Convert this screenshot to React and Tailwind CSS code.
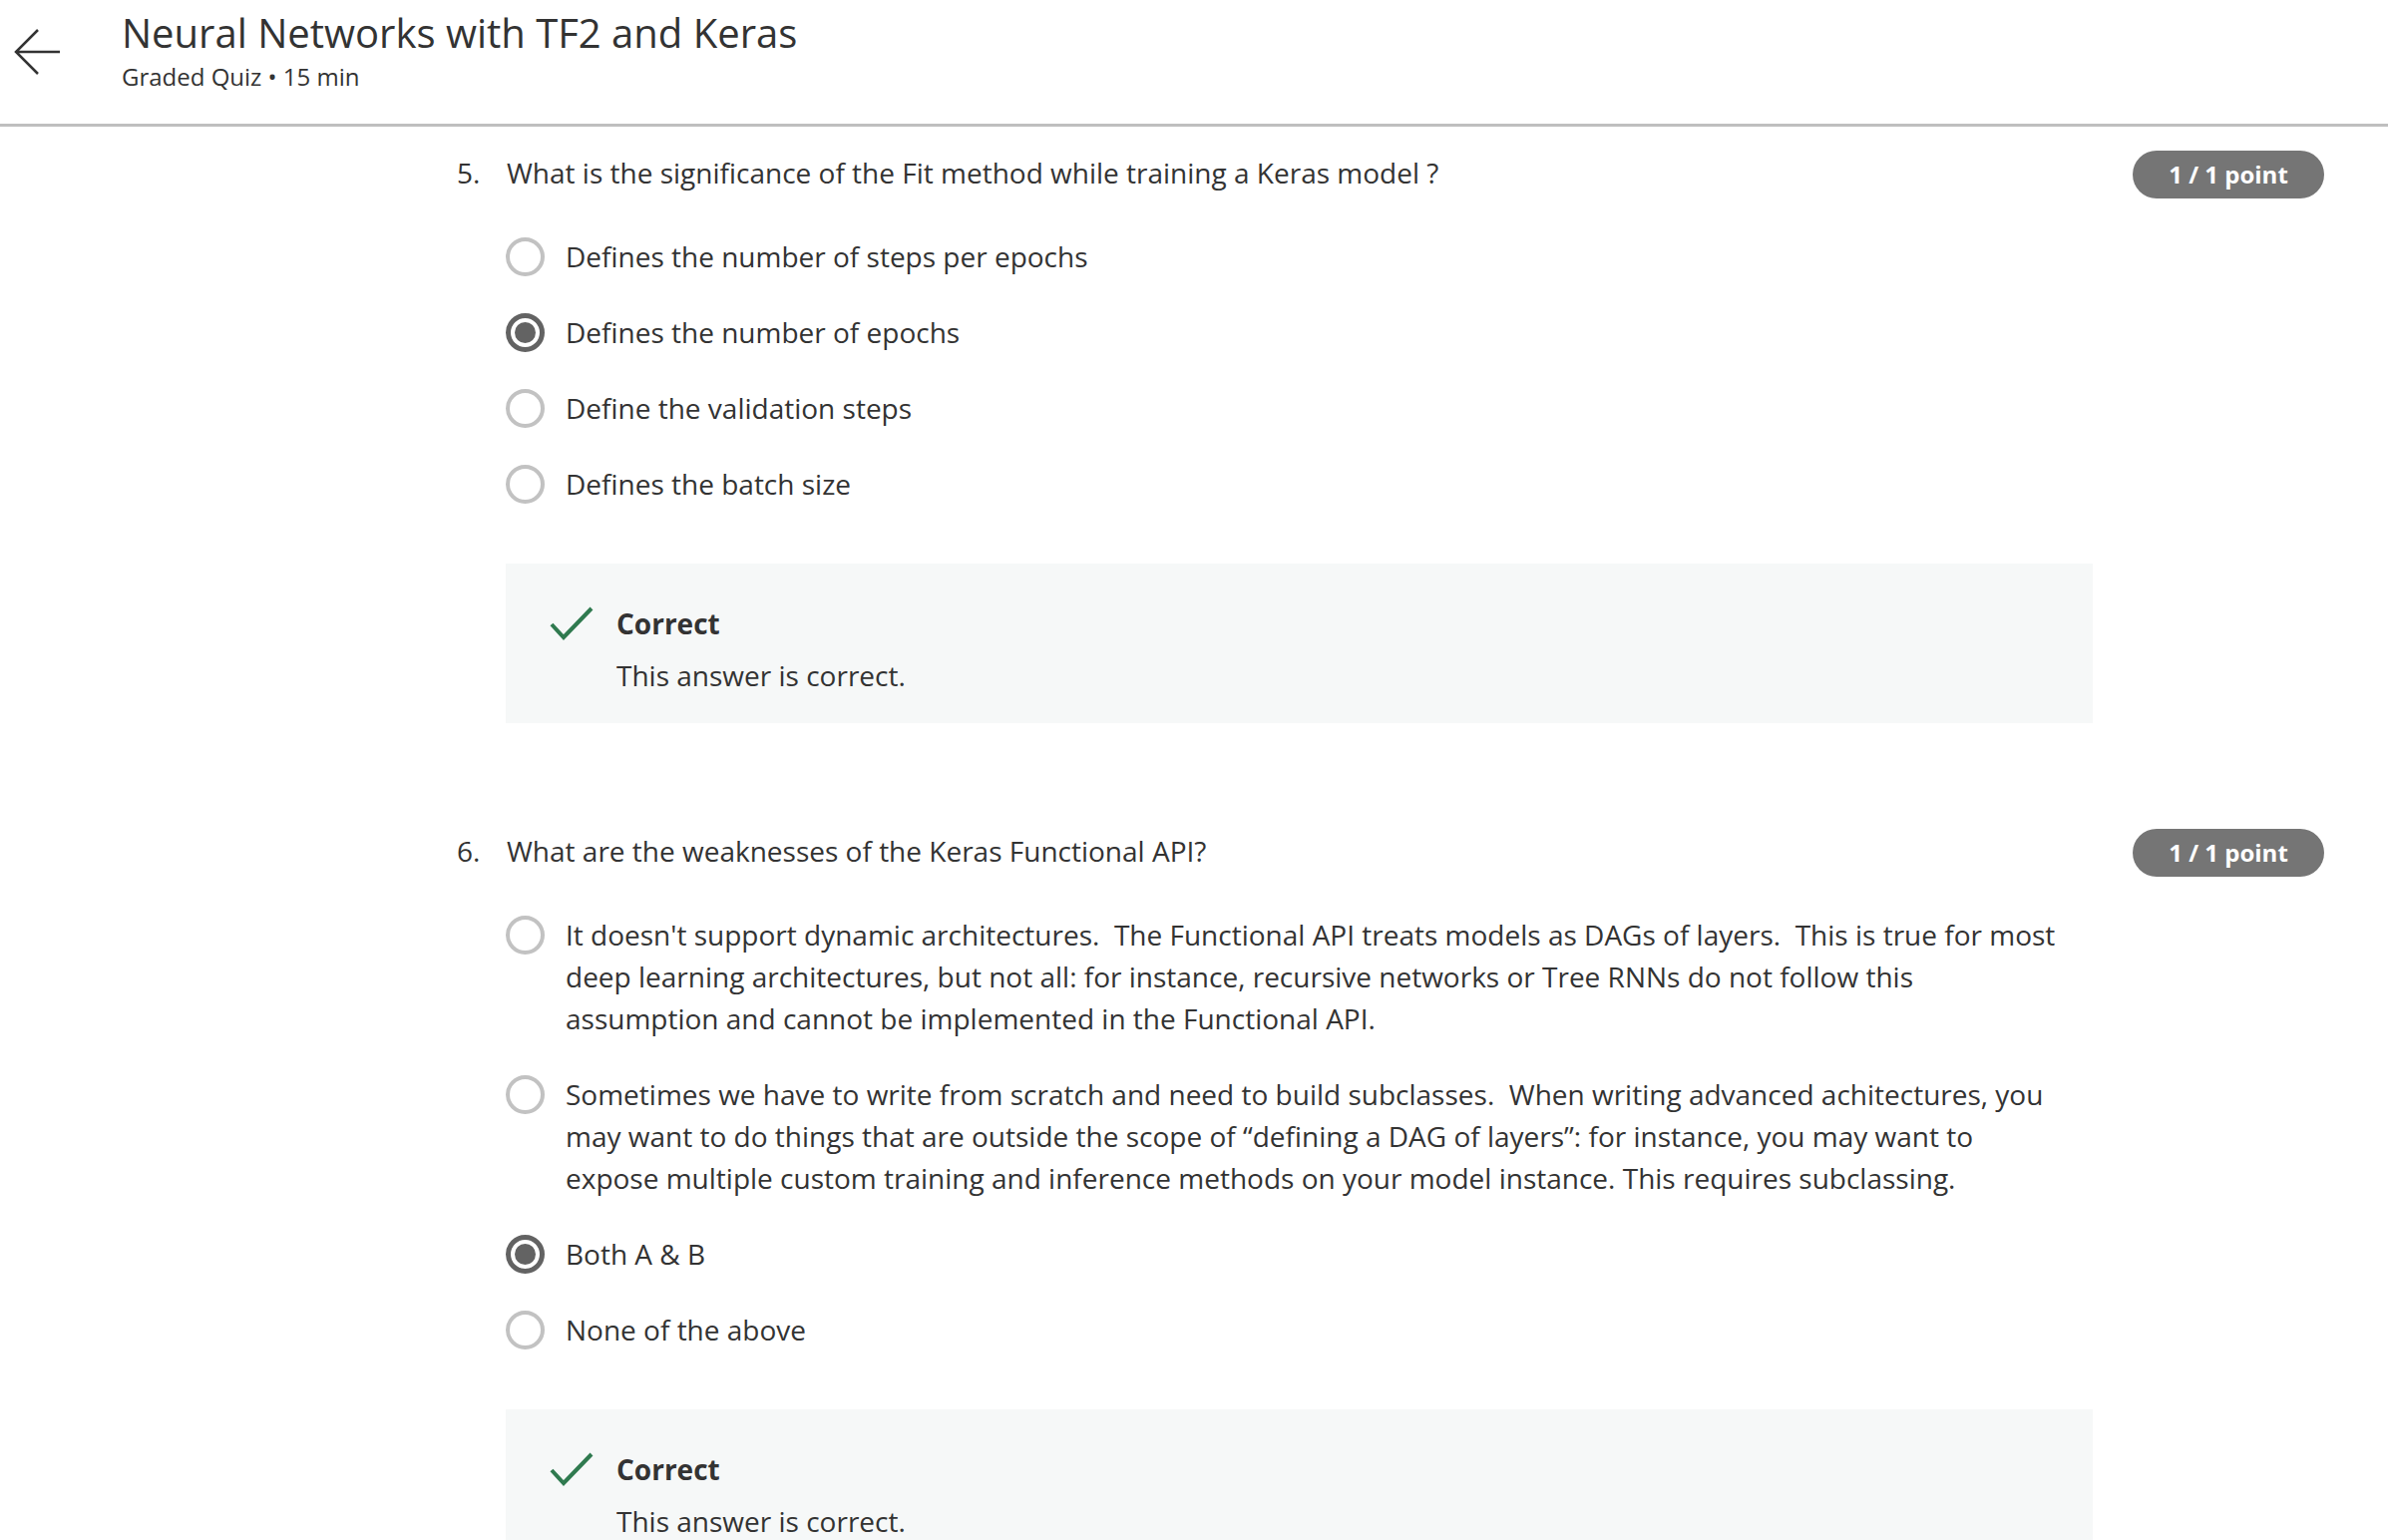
import React from "react";

const font = {
  fontFamily: '"Open Sans", "Liberation Sans", sans-serif',
};

const questions = [
  {
    num: "5.",
    text: "What is the significance of the Fit method while training a Keras model ?",
    options: [
      "Defines the number of steps per epochs",
      "Defines the number of epochs",
      "Define the validation steps",
      "Defines the batch size",
    ],
    selected: 1,
  },
  {
    num: "6.",
    text: "What are the weaknesses of the Keras Functional API?",
    options: [
      "It doesn't support dynamic architectures.\u00a0 The Functional API treats models as DAGs of layers.\u00a0 This is true for most deep learning architectures, but not all: for instance, recursive networks or Tree RNNs do not follow this assumption and cannot be implemented in the Functional API.",
      "Sometimes we have to write from scratch and need to build subclasses.\u00a0 When writing advanced achitectures, you may want to do things that are outside the scope of \u201cdefining a DAG of layers\u201d: for instance, you may want to expose multiple custom training and inference methods on your model instance. This requires subclassing.",
      "Both A & B",
      "None of the above",
    ],
    selected: 2,
  },
];

function Radio({ checked }) {
  if (checked) {
    return (
      <div className="w-[39px] h-[39px] shrink-0 rounded-full border-[5px] border-[#636363] flex items-center justify-center">
        <div className="w-[21px] h-[21px] rounded-full bg-[#636363]" />
      </div>
    );
  }
  return (
    <div className="w-[39px] h-[39px] shrink-0 rounded-full border-[4px] border-[#c2c2c2] bg-white" />
  );
}

function Question({ q }) {
  return (
    <div className="flex pl-[458px] pr-[64px]">
      <div className="w-[49px] shrink-0 text-[28px] leading-[42px] text-[#333]">
        {q.num}
      </div>

      <div className="w-[1591px] shrink-0">
        <p className="pl-px text-[28px] leading-[42px] text-[#333]">{q.text}</p>

        <div className="flex flex-col gap-[34px] mt-[42px]">
          {q.options.map((opt, i) => (
            <div key={i} className="flex items-start gap-[21px]">
              <div className="h-[42px] flex items-center">
                <Radio checked={q.selected === i} />
              </div>
              <p className="max-w-[1502px] text-[28px] leading-[42px] text-[#333]">
                {opt}
              </p>
            </div>
          ))}
        </div>

        <div className="mt-[59px] bg-[#f6f8f8] pl-[44px] pr-8 pt-[39px] pb-[27px]">
          <div className="flex items-center gap-[23px]">
            <svg width="44" height="34" viewBox="0 0 44 34" fill="none">
              <path
                d="M2 18 L14 31 L42 2"
                stroke="#2f7a4f"
                strokeWidth="4"
              />
            </svg>
            <span className="text-[28px] leading-[42px] font-bold text-[#333]">
              Correct
            </span>
          </div>
          <p className="mt-[10px] pl-[67px] text-[28px] leading-[42px] text-[#333]">
            This answer is correct.
          </p>
        </div>
      </div>

      <div className="flex-1 flex justify-end">
        <div className="h-[48px] w-[192px] rounded-full bg-[#757575] flex items-center justify-center text-white font-bold text-[24px] -mt-px">
          1 / 1 point
        </div>
      </div>
    </div>
  );
}

export default function App() {
  return (
    <div className="min-h-screen bg-white" style={font}>
      <header className="h-[127px] border-b-[3px] border-[#bfbfbf] flex items-start">
        <button className="w-[122px] h-[124px] flex items-start pl-[14px] pt-[29px]">
          <svg width="48" height="46" viewBox="0 0 48 46" fill="none">
            <path
              d="M46 23 H2 M24 1 L2 23 L24 45"
              stroke="#333"
              strokeWidth="2.5"
            />
          </svg>
        </button>
        <div className="pt-[5px]">
          <h1 className="text-[40px] leading-[56px] text-[#333]">
            Neural Networks with TF2 and Keras
          </h1>
          <p className="text-[24px] leading-[32px] text-[#333]">
            Graded Quiz • 15 min
          </p>
        </div>
      </header>

      <main className="pt-[25px] pb-20 flex flex-col gap-[107px]">
        {questions.map((q) => (
          <Question key={q.num} q={q} />
        ))}
      </main>
    </div>
  );
}
